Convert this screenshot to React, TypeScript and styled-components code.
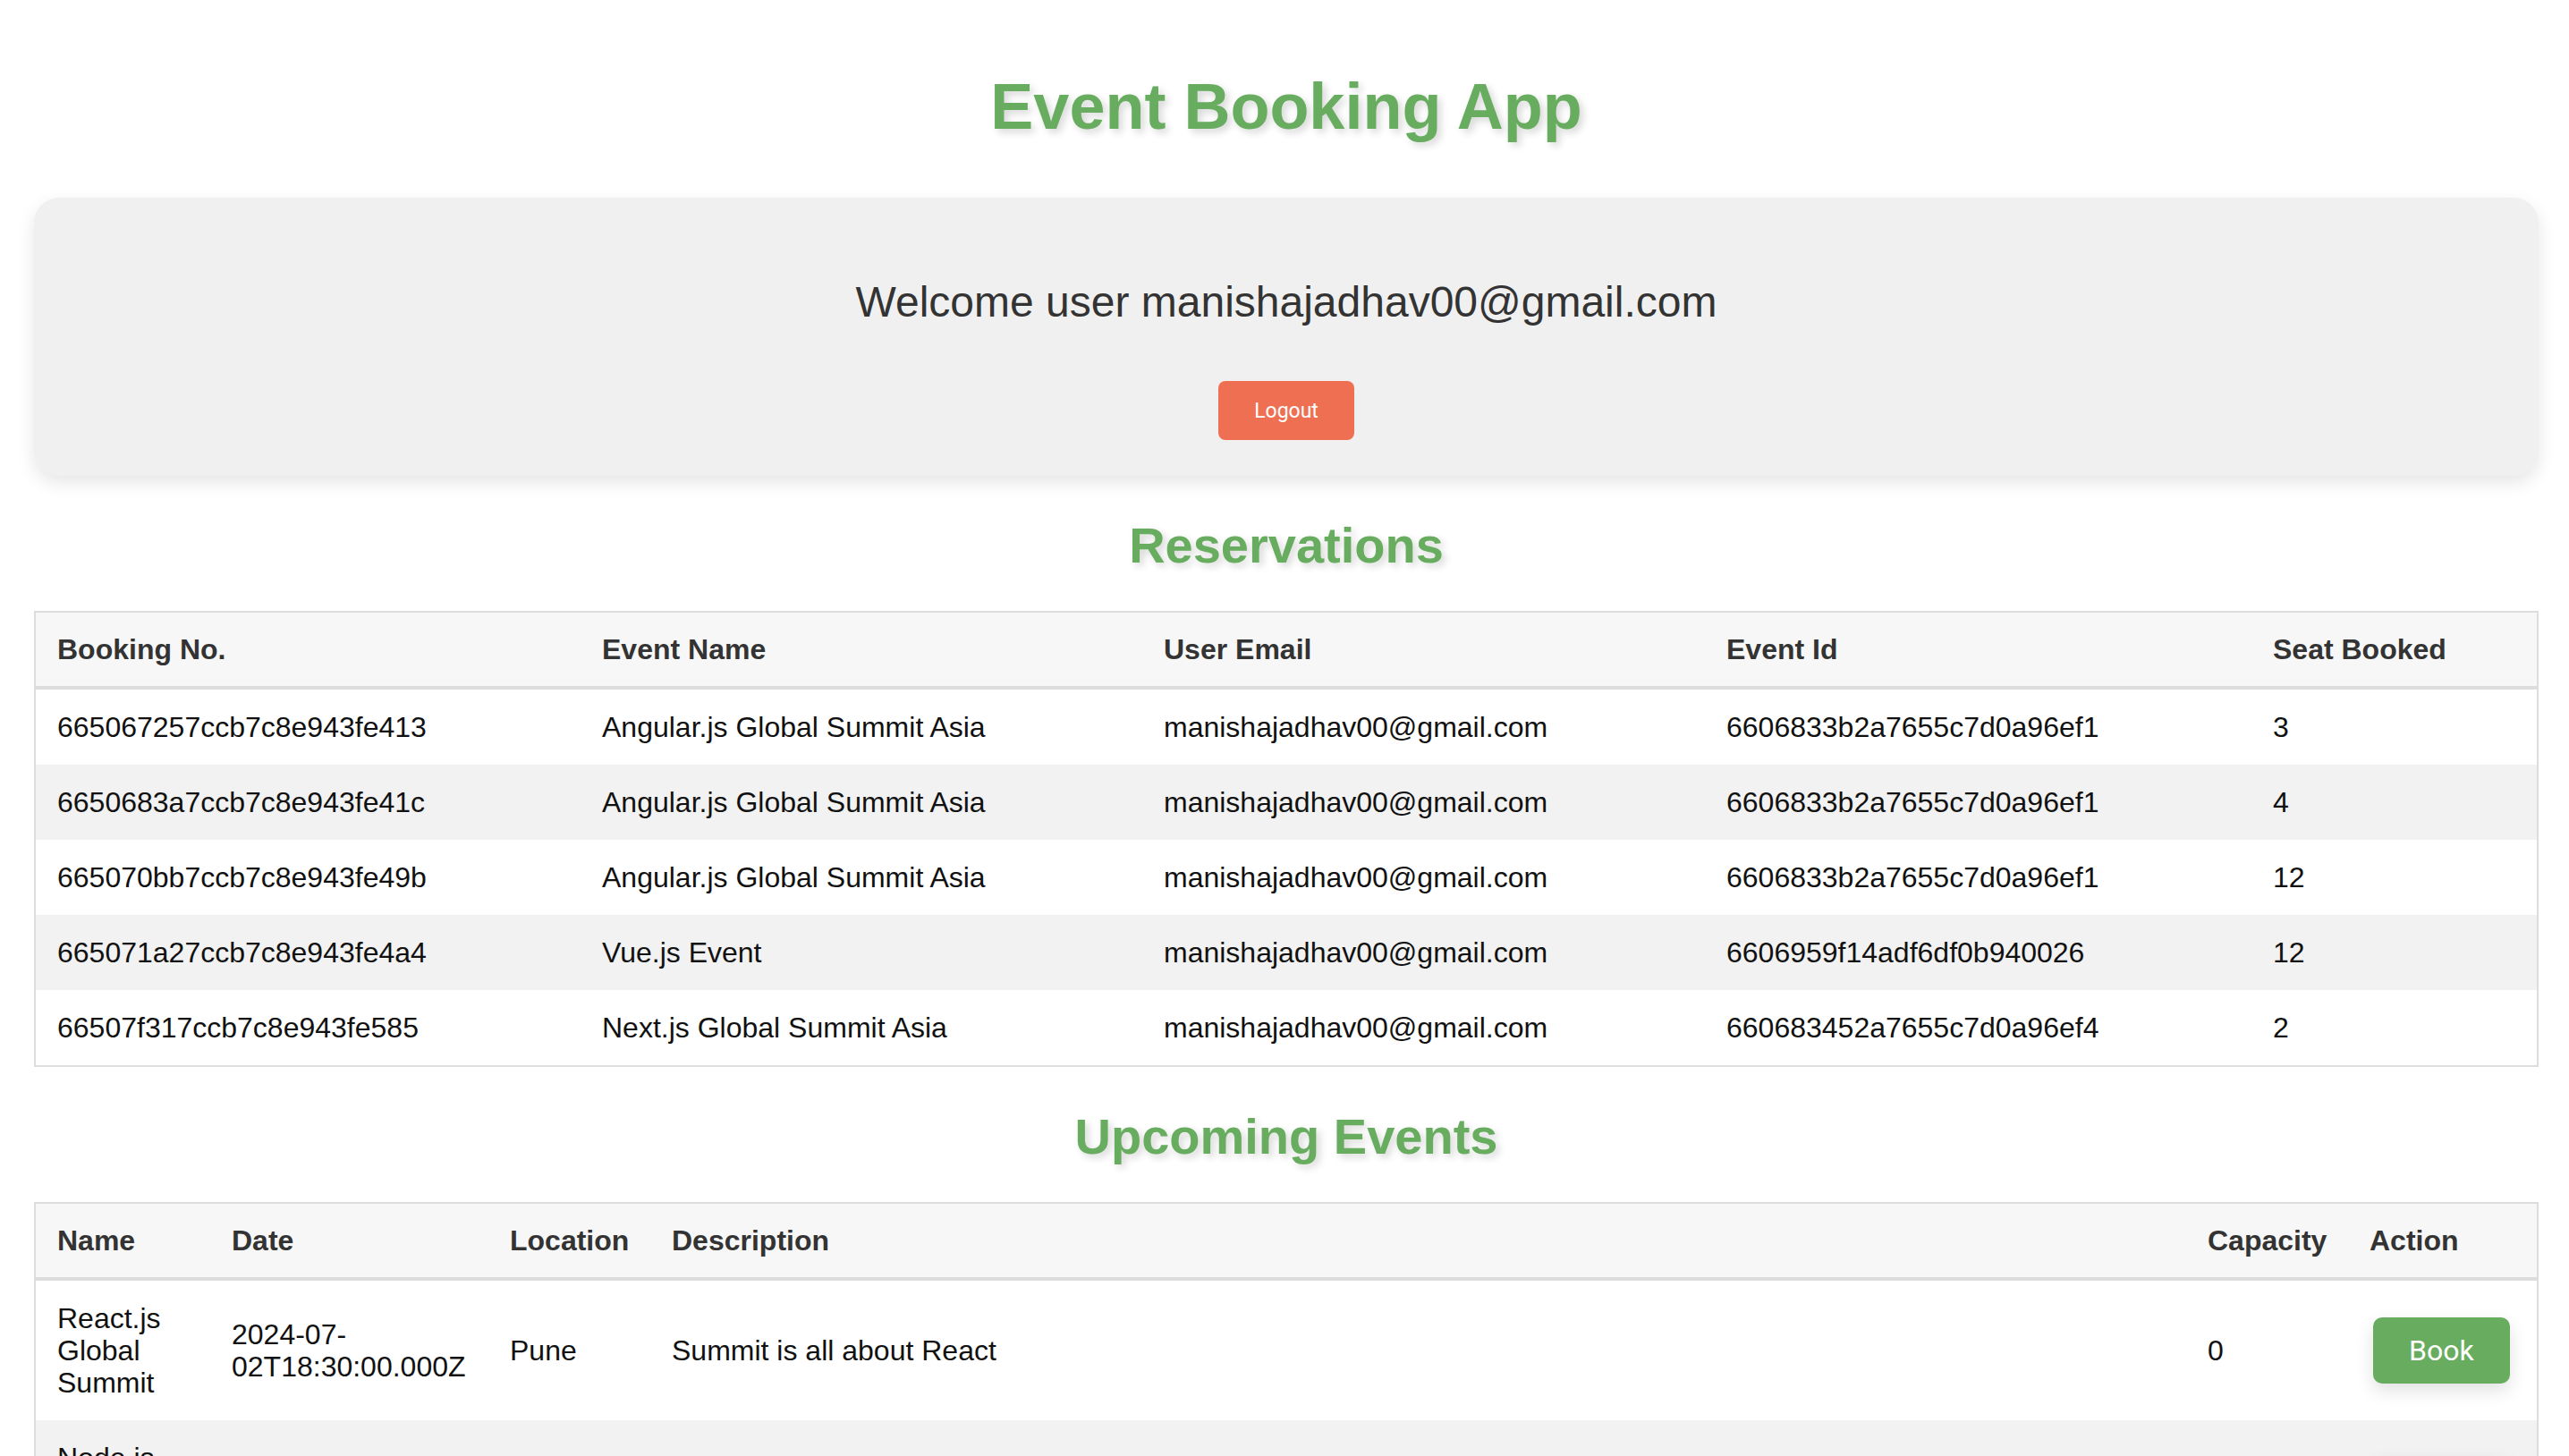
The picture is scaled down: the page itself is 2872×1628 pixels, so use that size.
import styled, { createGlobalStyle } from "styled-components";

const GlobalStyle = createGlobalStyle`
  html, body {
    margin: 0;
    padding: 0;
    background: #ffffff;
  }
  body {
    font-family: "Liberation Sans", Arial, sans-serif;
    color: #000;
  }
`;

const reservations = [
  {
    id: "665067257ccb7c8e943fe413",
    eventName: "Angular.js Global Summit Asia",
    email: "manishajadhav00@gmail.com",
    eventId: "6606833b2a7655c7d0a96ef1",
    seats: 3,
  },
  {
    id: "6650683a7ccb7c8e943fe41c",
    eventName: "Angular.js Global Summit Asia",
    email: "manishajadhav00@gmail.com",
    eventId: "6606833b2a7655c7d0a96ef1",
    seats: 4,
  },
  {
    id: "665070bb7ccb7c8e943fe49b",
    eventName: "Angular.js Global Summit Asia",
    email: "manishajadhav00@gmail.com",
    eventId: "6606833b2a7655c7d0a96ef1",
    seats: 12,
  },
  {
    id: "665071a27ccb7c8e943fe4a4",
    eventName: "Vue.js Event",
    email: "manishajadhav00@gmail.com",
    eventId: "6606959f14adf6df0b940026",
    seats: 12,
  },
  {
    id: "66507f317ccb7c8e943fe585",
    eventName: "Next.js Global Summit Asia",
    email: "manishajadhav00@gmail.com",
    eventId: "660683452a7655c7d0a96ef4",
    seats: 2,
  },
];

const events = [
  {
    id: 1,
    name: "React.js Global Summit",
    date: "2024-07-02T18:30:00.000Z",
    location: "Pune",
    description: "Summit is all about React",
    capacity: 0,
  },
  {
    id: 2,
    name: "Node.js Global Summit",
    date: "2024-07-10T18:30:00.000Z",
    location: "Mumbai",
    description: "Summit is all about Node",
    capacity: 40,
  },
  {
    id: 3,
    name: "Angular.js Global Summit Asia",
    date: "2024-08-01T18:30:00.000Z",
    location: "Bangalore",
    description: "Summit is all about Angular",
    capacity: 19,
  },
];

const App = () => {
  return (
    <>
      <GlobalStyle />
      <Page>
        <Title>Event Booking App</Title>

        <WelcomeCard>
          <WelcomeText>Welcome user manishajadhav00@gmail.com</WelcomeText>
          <LogoutButton>Logout</LogoutButton>
        </WelcomeCard>

        <SectionTitle>Reservations</SectionTitle>
        <Table>
          <colgroup>
            <col style={{ width: 610 }} />
            <col style={{ width: 628 }} />
            <col style={{ width: 629 }} />
            <col style={{ width: 611 }} />
            <col />
          </colgroup>
          <thead>
            <tr>
              <Th>Booking No.</Th>
              <Th>Event Name</Th>
              <Th>User Email</Th>
              <Th>Event Id</Th>
              <Th>Seat Booked</Th>
            </tr>
          </thead>
          <tbody>
            {reservations.map((r) => (
              <Row key={r.id}>
                <Td>{r.id}</Td>
                <Td>{r.eventName}</Td>
                <Td>{r.email}</Td>
                <Td>{r.eventId}</Td>
                <Td>{r.seats}</Td>
              </Row>
            ))}
          </tbody>
        </Table>

        <SectionTitle>Upcoming Events</SectionTitle>
        <Table>
          <colgroup>
            <col style={{ width: 196 }} />
            <col style={{ width: 311 }} />
            <col style={{ width: 181 }} />
            <col />
            <col style={{ width: 181 }} />
            <col style={{ width: 212 }} />
          </colgroup>
          <thead>
            <tr>
              <Th>Name</Th>
              <Th>Date</Th>
              <Th>Location</Th>
              <Th>Description</Th>
              <Th>Capacity</Th>
              <Th>Action</Th>
            </tr>
          </thead>
          <tbody>
            {events.map((e) => (
              <Row key={e.id}>
                <Td>{e.name}</Td>
                <Td>{e.date}</Td>
                <Td>{e.location}</Td>
                <Td>{e.description}</Td>
                <Td>{e.capacity}</Td>
                <Td>
                  <BookButton>Book</BookButton>
                </Td>
              </Row>
            ))}
          </tbody>
        </Table>
      </Page>
    </>
  );
};

const Page = styled.div`
  width: 2800px;
  margin: 0 0 0 38px;
  display: flex;
  flex-direction: column;
  align-items: stretch;
`;

const Title = styled.h1`
  margin: 78px 0 61px;
  text-align: center;
  font-size: 72px;
  font-weight: bold;
  color: #68ad5f;
  text-shadow: 4px 4px 8px rgba(0, 0, 0, 0.16);
`;

const WelcomeCard = styled.div`
  display: flex;
  flex-direction: column;
  align-items: center;
  padding: 40px;
  background-color: #f0f0f0;
  border-radius: 28px;
  box-shadow: 0 8px 20px rgba(0, 0, 0, 0.1);
`;

const WelcomeText = styled.h2`
  margin: 49px 0 61px;
  font-size: 48px;
  font-weight: normal;
  color: #333;
`;

const LogoutButton = styled.button`
  height: 66px;
  padding: 0 40px;
  font-family: Roboto, "Open Sans", sans-serif;
  font-size: 23px;
  color: #fff;
  background-color: #ef6f53;
  border: none;
  border-radius: 8px;
  cursor: pointer;
`;

const SectionTitle = styled.h2`
  margin: 45px 0 41px;
  text-align: center;
  font-size: 56px;
  font-weight: bold;
  color: #68ad5f;
  text-shadow: 4px 4px 8px rgba(0, 0, 0, 0.16);
`;

const Table = styled.table`
  width: 100%;
  table-layout: fixed;
  border-collapse: collapse;
  border: 2px solid #ddd;
  font-size: 32px;
`;

const Th = styled.th`
  padding: 23px 24px 22px;
  text-align: left;
  font-weight: bold;
  color: #333;
  background-color: #f7f7f7;
  border-bottom: 4px solid #ddd;
`;

const Row = styled.tr`
  background-color: #fff;

  &:nth-child(even) {
    background-color: #f2f2f2;
  }
`;

const Td = styled.td`
  padding: 24px;
  text-align: left;
  vertical-align: middle;
  color: #111;
  line-height: 36px;
`;

const BookButton = styled.button`
  margin-left: 4px;
  padding: 18px 40px;
  font-family: Roboto, "Open Sans", sans-serif;
  font-size: 32px;
  color: #fff;
  background-color: #68ad5f;
  border: none;
  border-radius: 10px;
  box-shadow: 0 8px 20px rgba(0, 0, 0, 0.12);
  cursor: pointer;
`;

export default App;
